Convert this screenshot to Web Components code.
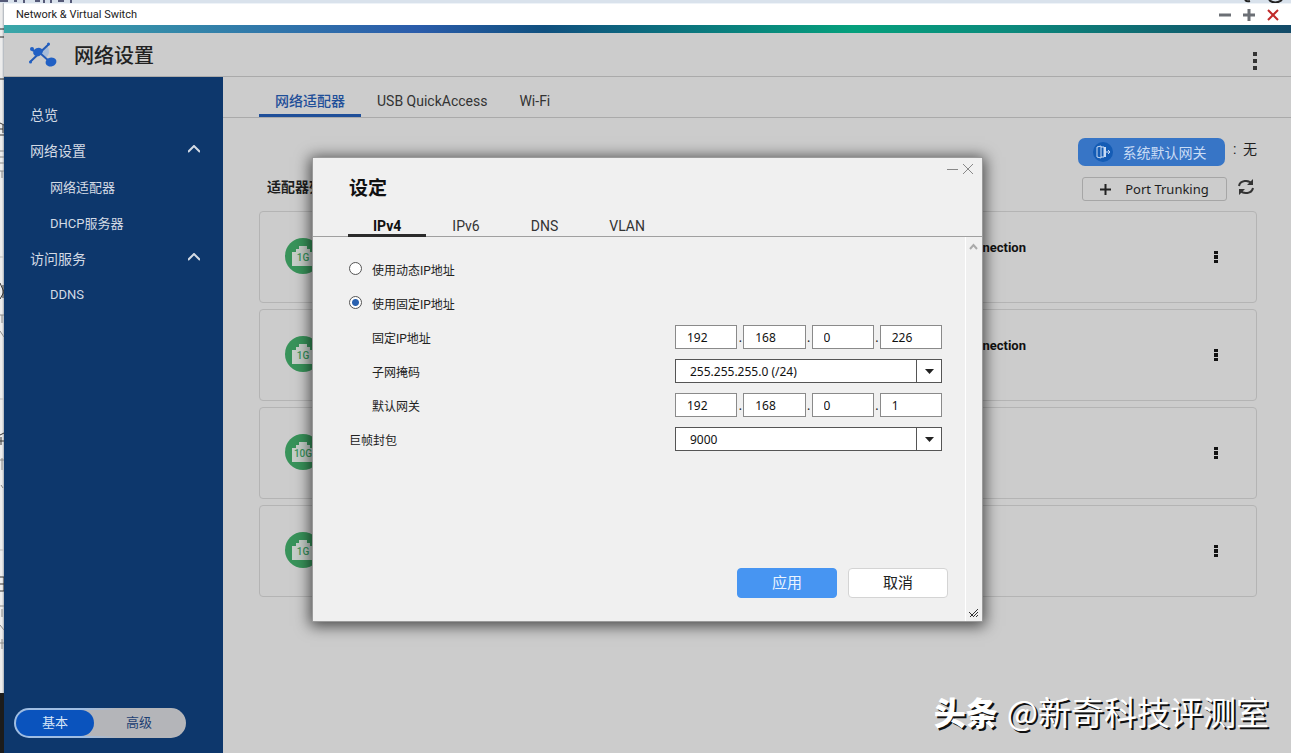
<!DOCTYPE html>
<html lang="zh-CN">
<head>
<meta charset="utf-8">
<title>Network &amp; Virtual Switch</title>
<style>
html, body { margin: 0; height: 100%; }
body { font-family: Roboto, "Noto Sans CJK SC", sans-serif; font-size: 14px; color: #1e1e1e; overflow: hidden; }
</style>
</head>
<body>
<nvs-desktop>
  <nvs-window heading="Network &amp; Virtual Switch">
    <nvs-header slot="header">网络设置</nvs-header>
    <nvs-sidebar slot="side"></nvs-sidebar>
    <nvs-adapters></nvs-adapters>
    <nvs-dialog slot="overlay" heading="设定"><nvs-ip-form></nvs-ip-form></nvs-dialog>
  </nvs-window>
  <nvs-credit slot="credit"><b>头条</b>@新奇科技评测室</nvs-credit>
</nvs-desktop>
<script>
function define(name, html) {
  customElements.define(name, class extends HTMLElement {
    constructor() {
      super();
      const t = document.createElement('template');
      t.innerHTML = '<style>*{box-sizing:border-box}button,input,select{font:inherit;color:inherit;margin:0}button{padding:0;border:0;background:none;cursor:pointer}svg{display:block}a{color:inherit;text-decoration:none}</style>' + html;
      this.attachShadow({ mode: 'open' }).append(t.content.cloneNode(true));
    }
    connectedCallback() {
      for (const el of this.shadowRoot.querySelectorAll('[data-attr]'))
        el.textContent = this.getAttribute(el.dataset.attr) || '';
    }
  });
}

define('nvs-desktop', `
<style>
:host { display: grid; grid-template: 3px minmax(0, 1fr) / 4px minmax(0, 1fr); min-height: 100vh; position: relative; background: #d9e2ec; }
.top { grid-column: 1 / 3; overflow: hidden; }
.edge { overflow: hidden; background: linear-gradient(to right, #ececec 2px, #a9b0b8); }
slot[name=credit] { display: block; position: absolute; right: 22px; bottom: 18px; }
</style>
<div class="top"><svg width="1291" height="3"><path d="M0 1h8M14 1h3M24 0v3M35 1h5M44 0v3M51 0v3M58 1h6M71 0v3" stroke="#555a78" stroke-width="2" fill="none"/><path d="M1245 0q2 2 5 1M1269 0q6 5 13 0" stroke="#222" stroke-width="2" fill="none"/></svg></div>
<div class="edge"><svg width="4" height="750">
<path d="M0 26h4M0 34h4M0 76h4" stroke="#222" stroke-width="1"/>
<path d="M0 120l4 2M0 126h3M3 122v8M0 132h4M0 280l4 9M0 296l4-7M3 282v13M0 432l4-2M0 438h4M1 434v8M0 574h4v14H0M0 581h4" stroke="#333" fill="none"/>
<path d="M0 148h4M0 154h4M0 160h4M0 168h4M2 168v7M0 312h4M2 312v8M0 328l4 6M0 457h4M2 455v12M1 482l2 3M0 603h4M2 606v8M0 622l4 5M0 640h4M2 636v10" stroke="#888" fill="none"/>
<path d="M0 254h4M0 396h4M0 547h4" stroke="#bbb"/>
<path d="M0 690h4v60H0z" fill="#1c1c1c"/></svg></div>
<slot></slot><slot name="credit"></slot>`);

define('nvs-window', `
<style>
:host { display: flex; flex-direction: column; position: relative; background: #ccc; }
.bar { display: flex; align-items: center; height: 22px; padding: 0 11px 0 12px; background: #fff; border-top: 1px solid #eef3f8; font-size: 11px; color: #222; }
.bar span { flex: 1; }
.bar button { width: 14px; height: 14px; margin-left: 10px; }
.stripe { height: 8px; background: linear-gradient(to right, #3aa7a8, #2b5cab 32%, #10507f 42%, #05a07c 66%, #0b8a7c 78%, #134a68); }
.body { flex: 1; display: flex; }
.body > slot:not([name]) { display: block; flex: 1; min-width: 0; }
.overlay { position: absolute; inset: 23px 0 0 0; display: grid; place-items: center; }
</style>
<div class="bar"><span data-attr="heading"></span>
<button aria-label="最小化"><svg width="14" height="14"><path d="M1 7h12" stroke="#6b6f75" stroke-width="3"/></svg></button>
<button aria-label="最大化"><svg width="14" height="14"><path d="M1 7h12M7 1v12" stroke="#6b6f75" stroke-width="3"/></svg></button>
<button aria-label="关闭"><svg width="14" height="14"><path d="M2 2l10 10M12 2L2 12" stroke="#c02a2a" stroke-width="2"/></svg></button></div>
<div class="stripe"></div>
<slot name="header"></slot>
<div class="body"><slot name="side"></slot><slot></slot></div>
<div class="overlay"><slot name="overlay"></slot></div>`);

define('nvs-header', `
<style>
:host { box-sizing: border-box; display: flex; align-items: center; height: 44px; padding: 0 24px; border-bottom: 1px solid #aaa; font-size: 20px; font-weight: 500; color: #222; }
.logo { margin-right: 16px; }
.name { flex: 1; }
button { width: 24px; height: 24px; display: grid; place-items: center; margin-top: 12px; }
</style>
<svg class="logo" width="30" height="26" viewBox="0 0 30 26"><path d="M10 10L19 3q5 9-2 13z" fill="#a7bcd8"/><path d="M2 20L21 2M4 8l8 3 10 9" stroke="#245ab4" stroke-width="2" fill="none"/><ellipse cx="10" cy="10" rx="5" ry="4" transform="rotate(-25 10 10)" fill="#2160c4"/><circle cx="4" cy="7" r="2" fill="#2160c4"/><circle cx="2.500" cy="20" r="1.500" fill="#2160c4"/><circle cx="20.500" cy="2" r="1.500" fill="#2160c4"/><ellipse cx="23" cy="20" rx="5.500" ry="4.500" transform="rotate(-15 23 20)" fill="#2160c4"/></svg>
<span class="name"><slot></slot></span>
<button aria-label="更多"><svg width="4" height="18"><path d="M0 0h4v4H0zM0 7h4v4H0zM0 14h4v4H0z" fill="#333"/></svg></button>`);

define('nvs-sidebar', `
<style>
:host { box-sizing: border-box; display: flex; flex-direction: column; justify-content: space-between; width: 219px; padding: 19px 0 15px; background: #0d376c; color: #d3dae4; }
nav a { display: flex; align-items: center; justify-content: space-between; height: 36px; padding: 0 23px 0 26px; }
nav a.sub { padding-left: 46px; font-size: 13px; }
nav svg { margin-top: -2px; }
.mode { display: flex; width: 172px; height: 30px; margin-left: 10px; padding: 2px; border-radius: 15px; background: linear-gradient(to right, #9fbde2 40%, #b5b6ba 60%); font-size: 13px; line-height: 24px; }
.mode button { width: 78px; border-radius: 13px; color: #d8e6f8; background: #0a53bd; }
.mode button + button { flex: 1; color: #1d3f73; background: #b4b5b9; margin-left: -14px; padding-left: 14px; border-radius: 0 13px 13px 0; }
.mode button:first-child { position: relative; }
</style>
<nav>
<a href="#overview">总览</a>
<a href="#network">网络设置<svg width="12" height="8"><path d="M0 7l6-6 6 6" stroke="#d3dae4" stroke-width="2" fill="none"/></svg></a>
<a class="sub" href="#adapters">网络适配器</a>
<a class="sub" href="#dhcp">DHCP服务器</a>
<a href="#access">访问服务<svg width="12" height="8"><path d="M0 7l6-6 6 6" stroke="#d3dae4" stroke-width="2" fill="none"/></svg></a>
<a class="sub" href="#ddns">DDNS</a>
</nav>
<div class="mode"><button>基本</button><button>高级</button></div>`);

define('nvs-adapter', `
<style>
:host { box-sizing: border-box; display: flex; align-items: center; height: 92px; padding: 0 30px 0 25px; border: 1px solid #b4b4b4; border-radius: 4px; }
.port { width: 36px; height: 36px; border-radius: 50%; background: #38935a; display: grid; margin-top: -2px; }
.port > * { grid-area: 1 / 1; place-self: center; }
.port span { font-size: 10px; line-height: 12px; font-weight: 500; color: #38935a; margin-top: 4px; }
.state { flex: 1; text-align: right; padding-right: 180px; font-size: 13px; font-weight: 700; color: #111; height: 36px; line-height: 18px; }
button { width: 20px; height: 24px; display: grid; place-items: center; }
</style>
<div class="port"><svg width="24" height="20"><path d="M1 6h4V3h3V0h8v3h3v3h4v14H1z" fill="#c6cec8"/></svg><span data-attr="speed"></span></div>
<div class="state" data-attr="state"></div>
<button aria-label="操作"><svg width="4" height="12"><path d="M0 0h4v3H0zM0 4h4v4H0zM0 9h4v3H0z" fill="#111"/></svg></button>`);

define('nvs-adapters', `
<style>
:host { display: block; }
.tabs { display: flex; height: 41px; padding: 0 36px; border-bottom: 1px solid #aaa; color: #333; }
.tabs a { padding: 7px 16px 0; height: 40px; line-height: 34px; }
.tabs a.on { color: #1f4f99; border-bottom: 3px solid #1f4f99; font-weight: 500; }
.content { padding: 20px 34px 0 36px; }
.row { display: flex; align-items: center; justify-content: flex-end; }
.gw { display: flex; align-items: center; justify-content: center; gap: 10px; width: 147px; height: 28px; padding-right: 4px; border-radius: 7px; background: #3775c6; color: #c9dcf5; }
.none { width: 24px; margin-left: 8px; white-space: nowrap; display: flex; justify-content: space-between; line-height: 22px; height: 28px; }
.second { margin-top: 11px; height: 24px; padding-right: 2px; }
h2 { flex: 1; margin: 0; padding-left: 8px; font-size: 14px; line-height: 20px; height: 24px; font-weight: 700; }
.trunk { display: flex; align-items: center; justify-content: center; gap: 14px; width: 145px; height: 24px; border: 1px solid #a6a6a6; border-radius: 3px; font-family: "Noto Sans", sans-serif; font-size: 13px; }
.refresh { width: 18px; height: 18px; margin: -4px 0 0 10px; }
.list { display: grid; gap: 6px; margin-top: 10px; }
</style>
<nav class="tabs"><a class="on" href="#nic">网络适配器</a><a href="#usb">USB QuickAccess</a><a href="#wifi">Wi-Fi</a></nav>
<div class="content">
<div class="row"><button class="gw"><svg width="20" height="20"><circle cx="10" cy="10" r="10" fill="#145cb5"/><path d="M8 4L4 5v10l4 1zM8 5h3v10H8M12 6v8" stroke="#c9dcf5" fill="none"/><path d="M11 5h2v10h-2z" fill="#c9dcf5"/><path d="M13 10h4M15 8l2 2-2 2" stroke="#c9dcf5" fill="none"/></svg>系统默认网关</button><span class="none"><span>:</span><span>无</span></span></div>
<div class="row second"><h2>适配器列表</h2><button class="trunk"><svg width="11" height="11"><path d="M0 5.500h11M5.500 0v11" stroke="#222" stroke-width="2"/></svg>Port Trunking</button><button class="refresh" aria-label="刷新"><svg width="18" height="18"><path d="M2 8a7 6 0 0 1 13-2M16 10a7 6 0 0 1-13 2" stroke="#333" stroke-width="2" fill="none"/><path d="M16 1v6h-6zM2 17v-6h6z" fill="#333"/></svg></button></div>
<div class="list">
<nvs-adapter speed="1G" state="Connection"></nvs-adapter>
<nvs-adapter speed="1G" state="Connection"></nvs-adapter>
<nvs-adapter speed="10G"></nvs-adapter>
<nvs-adapter speed="1G"></nvs-adapter>
</div></div>`);

define('nvs-dialog', `
<style>
:host { box-sizing: border-box; display: flex; flex-direction: column; position: relative; width: 671px; max-width: 100%; height: 465px; background: #f0f0f0; border: 1px solid #fafafa; outline: 1px solid #9a9a9a; outline-offset: -1px; box-shadow: 0 2px 14px 2px rgba(0,0,0,.65); }
.ctl { position: absolute; top: 5px; right: 8px; display: flex; gap: 4px; }
h1 { margin: 0; padding: 17px 0 0 36px; font-size: 19px; line-height: 28px; font-weight: 700; color: #111; }
.tabs { display: flex; height: 34px; padding: 0 35px; border-bottom: 1px solid #a0a0a0; color: #333; }
.tabs a { height: 34px; padding: 9px 25px 0 26px; line-height: 28px; }
.tabs a.on { font-weight: 700; color: #111; border-bottom: 3px solid #2b2b2b; padding-left: 25px; }
.body { flex: 1; display: flex; }
.pane { flex: 1; display: flex; flex-direction: column; justify-content: space-between; padding: 15px 17px 23px 35px; border-right: 1px solid #fff; }
.rail { width: 16px; display: flex; flex-direction: column; justify-content: space-between; align-items: center; padding: 6px 1px 4px 0; }
.foot { display: flex; justify-content: flex-end; gap: 11px; font-size: 15px; line-height: 26px; }
.foot button { width: 100px; height: 30px; border-radius: 4px; background: #fff; border: 1px solid #d4d4d4; color: #222; }
.foot .ok { background: #4795f2; border-color: #4795f2; color: #eaf4ff; }
</style>
<div class="ctl"><button aria-label="最小化"><svg width="11" height="12"><path d="M0 6.500h11" stroke="#888"/></svg></button><button aria-label="关闭"><svg width="12" height="12"><path d="M1 1l10 10M11 1L1 11" stroke="#888"/></svg></button></div>
<h1 data-attr="heading"></h1>
<nav class="tabs"><a class="on" href="#v4">IPv4</a><a href="#v6">IPv6</a><a href="#dns">DNS</a><a href="#vlan">VLAN</a></nav>
<div class="body"><div class="pane"><slot></slot><div class="foot"><button class="ok">应用</button><button>取消</button></div></div>
<div class="rail"><svg width="9" height="7"><path d="M1 6l3.500-4L8 6" stroke="#aaa" stroke-width="2" fill="none"/></svg><svg width="9" height="9"><path d="M1 9l8-8M4 9l5-5M7 9l2-2M0 4l4 4" stroke="#333" fill="none"/></svg></div></div>`);

define('nvs-ip-form', `
<style>
:host { display: block; font-size: 12px; color: #222; }
form { margin: 0; }
.r { display: flex; align-items: center; height: 34px; padding-right: 6px; }
.r > label { flex: 1; padding-left: 24px; }
.r > .wide { padding-left: 1px; }
.r > .opt { display: flex; align-items: center; gap: 10px; padding-left: 1px; }
.opt input { appearance: none; width: 13px; height: 13px; margin-top: -2px; border: 1px solid #555; border-radius: 50%; background: #fff; }
.opt input:checked { background: radial-gradient(circle, #2a62b0 3px, #fff 4px); }
.ip, .sel { width: 267px; height: 24px; font-family: "Noto Sans", sans-serif; }
.sel { position: relative; }
select { appearance: none; width: 100%; height: 24px; padding: 0 14px; border: 1px solid #555; border-radius: 0; background: #fff; color: #111; }
.sel svg { position: absolute; right: 0; top: 0; pointer-events: none; }
.ip { display: flex; }
.ip input { flex: 1; min-width: 0; height: 24px; padding: 0 11px; border: 1px solid #8a8a8a; border-radius: 0; background: #fff; color: #111; }
.ip span { width: 6px; text-align: center; line-height: 26px; }
</style>
<form>
<div class="r"><label class="opt"><input type="radio" name="mode">使用动态IP地址</label></div>
<div class="r"><label class="opt"><input type="radio" name="mode" checked>使用固定IP地址</label></div>
<div class="r"><label for="ip1">固定IP地址</label><div class="ip"><input id="ip1" value="192"><span>.</span><input aria-label="固定IP地址 2" value="168"><span>.</span><input aria-label="固定IP地址 3" value="0"><span>.</span><input aria-label="固定IP地址 4" value="226"></div></div>
<div class="r"><label for="mask">子网掩码</label><div class="sel"><select id="mask"><option>255.255.255.0 (/24)</option></select><svg width="26" height="24"><path d="M.500 0v24" stroke="#555"/><path d="M9 10h9l-4.500 5z" fill="#222"/></svg></div></div>
<div class="r"><label for="gw1">默认网关</label><div class="ip"><input id="gw1" value="192"><span>.</span><input aria-label="默认网关 2" value="168"><span>.</span><input aria-label="默认网关 3" value="0"><span>.</span><input aria-label="默认网关 4" value="1"></div></div>
<div class="r"><label class="wide" for="mtu">巨帧封包</label><div class="sel"><select id="mtu"><option>9000</option></select><svg width="26" height="24"><path d="M.500 0v24" stroke="#555"/><path d="M9 10h9l-4.500 5z" fill="#222"/></svg></div></div>
</form>`);

define('nvs-credit', `
<style>
:host { display: flex; align-items: center; gap: 9px; font-family: "Noto Sans CJK SC", sans-serif; font-size: 33px; line-height: 48px; color: #fff; text-shadow: 2px 2px 0 #111; white-space: nowrap; pointer-events: none; }
::slotted(b) { font-size: 32px; font-weight: 900; }
</style><slot></slot>`);
</script>
</body>
</html>
